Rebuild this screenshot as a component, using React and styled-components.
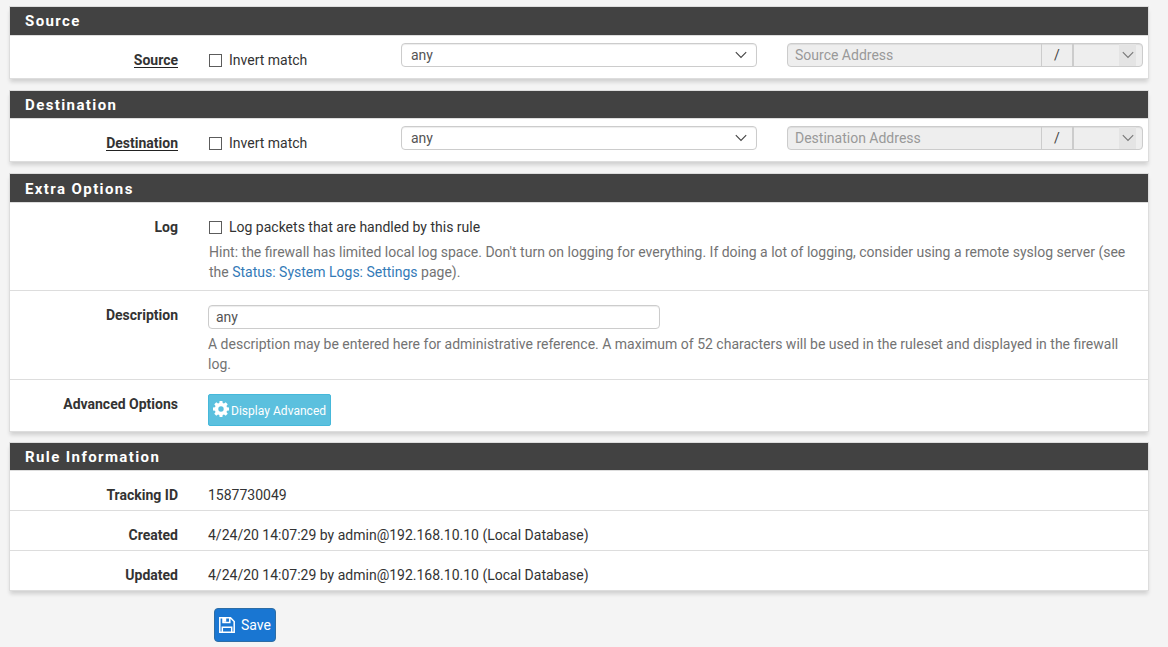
import React from 'react';
import styled, { createGlobalStyle } from 'styled-components';

const GlobalStyle = createGlobalStyle`
  * { box-sizing: border-box; }
  body {
    margin: 0;
    background: #f4f4f4;
    color: #333;
    font-family: Roboto, "Liberation Sans", sans-serif;
    font-size: 14px;
    line-height: 20px;
  }
`;

const Page = styled.main`
  height: 647px;
  padding: 6px 19px 0 9px;
  overflow: hidden;
`;

const Panel = styled.section`
  width: 1140px;
  margin-bottom: ${(p) => p.$gap}px;
  background: #fff;
  border: 1px solid #ddd;
  box-shadow: 0 4px 4px -1px rgba(0, 0, 0, 0.15);
`;

const PanelTitle = styled.h2`
  height: ${(p) => p.$height + 1}px;
  margin: 0;
  padding-left: 15px;
  border-bottom: 1px solid #ddd;
  background: #424242;
  background-clip: padding-box;
  color: #fff;
  font-size: 15px;
  font-weight: 700;
  letter-spacing: 1.4px;
  line-height: ${(p) => p.$line || 28}px;
`;

const Row = styled.div`
  display: flex;
  height: ${(p) => p.$height}px;
  padding-top: ${(p) => p.$top || 0}px;
  & + & { border-top: 1px solid #ddd; }
`;

const Label = styled.div`
  flex: none;
  width: 168px;
  margin-right: 30px;
  padding-top: ${(p) => p.$top || 0}px;
  font-weight: 700;
  text-align: right;
`;

const Underlined = styled.span`
  display: inline-block;
  height: 18px;
  border-bottom: 1px solid #222;
`;

const Content = styled.div`
  width: 925px;
`;

const Check = styled.label`
  display: flex;
  align-items: center;
  width: ${(p) => p.$width || 'auto'};
  height: 20px;
  margin-top: ${(p) => p.$top || 0}px;
  padding-left: 1px;
`;

const Box = styled.input`
  appearance: none;
  flex: none;
  width: 13px;
  height: 13px;
  margin: 1px 7px 0 0;
  border: 1px solid #5c5c5c;
  background: #fff;
`;

const Control = styled.div`
  display: flex;
  justify-content: space-between;
  width: 356px;
  height: 24px;
  margin-right: 30px;
  padding: 0 9px;
  border: 1px solid #ccc;
  border-radius: 4px;
  box-shadow: inset 0 1px 1px rgba(0, 0, 0, 0.075);
  color: #555;
  line-height: 23px;
`;

const Chevron = styled.svg`
  width: 12px;
  height: 8px;
  margin-top: 7px;
  fill: none;
  stroke: ${(p) => p.$color || '#444'};
  stroke-width: 1.1;
`;

const Group = styled.div`
  display: flex;
  width: 356px;
  height: 24px;
  border: 1px solid #ccc;
  border-radius: 4px;
  background: #eee;
  box-shadow: inset 0 1px 1px rgba(0, 0, 0, 0.075);
`;

const TextInput = styled.input`
  display: block;
  width: ${(p) => p.$width}px;
  height: ${(p) => p.$height}px;
  margin: 0;
  padding: 0 7px 1px;
  border: 0;
  outline: 0;
  background: transparent;
  color: #555;
  font: inherit;
  &::placeholder { color: #999; opacity: 1; }
`;

const DescriptionInput = styled(TextInput)`
  padding-top: 1px;
  border: 1px solid #ccc;
  border-radius: 4px;
  box-shadow: inset 0 1px 1px rgba(0, 0, 0, 0.075);
`;

const Slash = styled.span`
  width: 33px;
  border: solid #ccc;
  border-width: 0 2px 0 1px;
  color: #444;
  line-height: 23px;
  text-align: center;
`;

const MaskSelect = styled.div`
  display: flex;
  justify-content: center;
  width: 17px;
  margin-left: 45px;
  background: #e4e4e4;
`;

const Help = styled.p`
  margin: ${(p) => p.$top}px 0 0;
  padding-left: ${(p) => p.$indent || 0}px;
  color: #737373;
`;

const Link = styled.a`
  color: #337ab7;
  text-decoration: none;
`;

const AdvancedButton = styled.button`
  display: flex;
  width: 123px;
  height: 32px;
  margin: 0;
  padding: 0 0 0 4px;
  border: 1px solid #46b8da;
  border-radius: 2px;
  background: #5bc0de;
  color: #fff;
  font: 12px/32px Roboto, sans-serif;
  letter-spacing: 0.03px;
  white-space: nowrap;
  svg { flex: none; width: 16px; height: 16px; margin: 5.5px 2px 0 0; }
`;

const SaveButton = styled.button`
  display: flex;
  align-items: center;
  width: 62px;
  height: 34px;
  margin: 0 0 0 205px;
  padding: 0 0 0 4px;
  border: 1px solid #2e6da4;
  border-radius: 4px;
  background: #1976d2;
  color: #fff;
  font: 14px/20px Roboto, sans-serif;
  svg { flex: none; width: 16px; height: 16px; margin: 0 6px 0 0; }
`;

function Arrow({ color }) {
  return (
    <Chevron viewBox="0 0 12 8" $color={color}>
      <path d="M.8 1.2 6 6.4l5.2-5.2" />
    </Chevron>
  );
}

function AddressRow({ name, height }) {
  return (
    <Row $height={height} $top={7}>
      <Label $top={7}><Underlined>{name}</Underlined></Label>
      <Check $width="193px" $top={7}><Box type="checkbox" />Invert match</Check>
      <Control><span>any</span><Arrow /></Control>
      <Group>
        <TextInput disabled placeholder={`${name} Address`} $width={253} $height={22} />
        <Slash>/</Slash>
        <MaskSelect><Arrow color="#777" /></MaskSelect>
      </Group>
    </Row>
  );
}

export default function App() {
  return (
    <>
      <GlobalStyle />
      <Page>
        <Panel $gap={11}>
          <PanelTitle $height={28}>Source</PanelTitle>
          <AddressRow name="Source" height={42} />
        </Panel>
        <Panel $gap={11}>
          <PanelTitle $height={27}>Destination</PanelTitle>
          <AddressRow name="Destination" height={42} />
        </Panel>
        <Panel $gap={10}>
          <PanelTitle $height={28} $line={30}>Extra Options</PanelTitle>
          <Row $height={87} $top={14}>
            <Label>Log</Label>
            <Content>
              <Check><Box type="checkbox" />Log packets that are handled by this rule</Check>
              <Help $top={5} $indent={1}>
                Hint: the firewall has limited local log space. Don't turn on logging for everything. If doing a lot of logging, consider using a remote syslog server (see<br />
                the <Link>Status: System Logs: Settings</Link> page).
              </Help>
            </Content>
          </Row>
          <Row $height={89} $top={14}>
            <Label>Description</Label>
            <Content>
              <DescriptionInput defaultValue="any" $width={452} $height={24} />
              <Help $top={5}>
                A description may be entered here for administrative reference. A maximum of 52 characters will be used in the ruleset and displayed in the firewall<br />
                log.
              </Help>
            </Content>
          </Row>
          <Row $height={52} $top={14}>
            <Label>Advanced Options</Label>
            <AdvancedButton>
              <svg viewBox="0 0 16 16" fill="#fff" fillRule="evenodd">
                <path d="M6.6 0h2.8l.3 2 1.3.5 1.7-1.2 2 2-1.2 1.7.5 1.3 2 .3v2.8l-2 .3-.5 1.3 1.2 1.7-2 2-1.7-1.2-1.3.5-.3 2H6.6l-.3-2-1.3-.5-1.7 1.2-2-2 1.2-1.7-.5-1.3-2-.3V6.6l2-.3.5-1.3-1.2-1.7 2-2L5 2.500 6.300 2zM8 5.300a2.700 2.700 0 1 0 0 5.400 2.700 2.700 0 0 0 0-5.400z" />
              </svg>
              Display Advanced
            </AdvancedButton>
          </Row>
        </Panel>
        <Panel $gap={17}>
          <PanelTitle $height={27}>Rule Information</PanelTitle>
          <Row $height={39} $top={14}>
            <Label>Tracking ID</Label><span>1587730049</span>
          </Row>
          <Row $height={40} $top={14}>
            <Label>Created</Label><span>4/24/20 14:07:29 by admin@192.168.10.10 (Local Database)</span>
          </Row>
          <Row $height={40} $top={14}>
            <Label>Updated</Label><span>4/24/20 14:07:29 by admin@192.168.10.10 (Local Database)</span>
          </Row>
        </Panel>
        <SaveButton>
          <svg viewBox="0 0 16 16" fill="none" stroke="#fff" strokeWidth="1.5">
            <path d="M.8.8h10.7l3.7 3.7v10.7H.8zM4 .8v4.7h6.8V.8M3.3 15.2v-5h9.4v5" />
            <path d="M4 1h3.2v3.800H4z" fill="#fff" stroke="none" />
          </svg>
          Save
        </SaveButton>
      </Page>
    </>
  );
}
